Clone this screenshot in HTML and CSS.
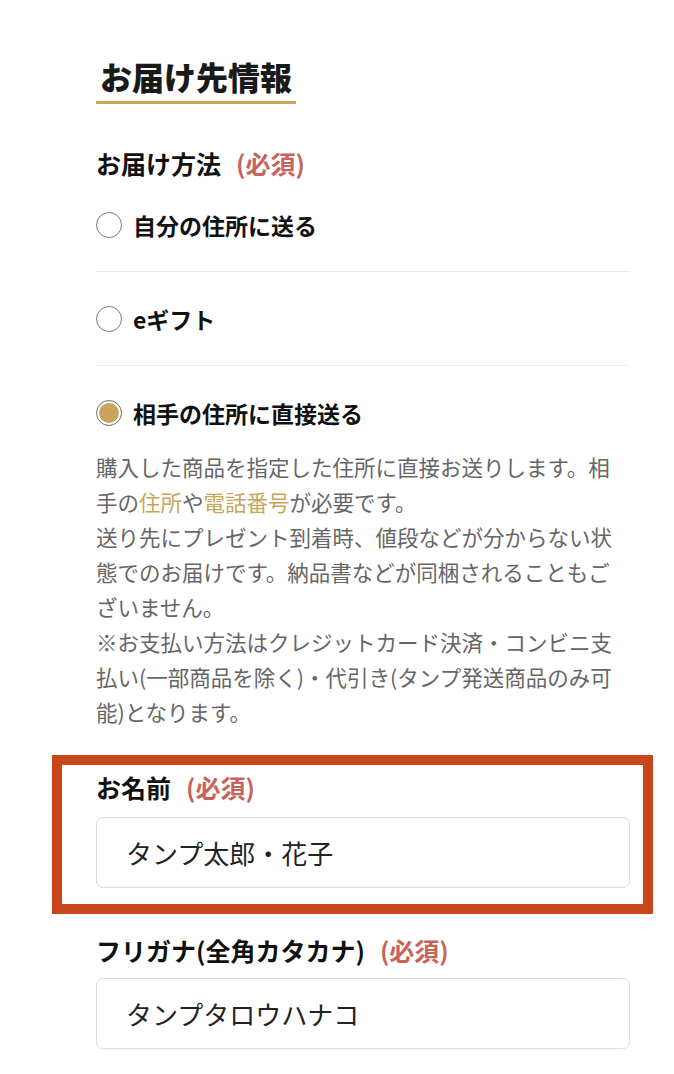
FILE: index.html
```html
<!DOCTYPE html>
<html lang="ja">
<head>
<meta charset="utf-8">
<title>お届け先情報</title>
<link rel="stylesheet" href="styles.css">
</head>
<body>
<div class="page">
  <h2 class="section-title">お届け先情報</h2>

  <div class="field-label field-label--method">お届け方法<span class="req">(必須)</span></div>
  <ul class="options">
    <li class="option">
      <div class="option-head"><span class="radio"></span><span class="option-text">自分の住所に送る</span></div>
    </li>
    <li class="option">
      <div class="option-head"><span class="radio"></span><span class="option-text">eギフト</span></div>
    </li>
    <li class="option option--selected">
      <div class="option-head"><span class="radio radio--on"></span><span class="option-text">相手の住所に直接送る</span></div>
      <p class="note">購入した商品を指定した住所に直接お送りします。相手の<span class="accent">住所</span>や<span class="accent">電話番号</span>が必要です。<br>送り先にプレゼント到着時、値段などが分からない状態でのお届けです。納品書などが同梱されることもございません。<br>※お支払い方法はクレジットカード決済・コンビニ支払い(一部商品を除く)・代引き(タンプ発送商品のみ可能)となります。</p>
    </li>
  </ul>

  <div class="field field--first field--highlight">
    <label class="field-label" for="name">お名前<span class="req">(必須)</span></label>
    <input class="text-input" id="name" type="text" value="タンプ太郎・花子">
  </div>

  <div class="field field--second">
    <label class="field-label" for="kana">フリガナ(全角カタカナ)<span class="req">(必須)</span></label>
    <input class="text-input" id="kana" type="text" value="タンプタロウハナコ">
  </div>
</div>
</body>
</html>
```

FILE: styles.css
```css
html, body {
  margin: 0;
  padding: 0;
  background: #ffffff;
}

body {
  font-family: "Noto Sans CJK JP", "Noto Sans", sans-serif;
  color: #111111;
}

.page {
  box-sizing: border-box;
  width: 674px;
  padding: 56px 44px 0 96px;
}

.section-title {
  width: fit-content;
  margin: 0;
  padding: 0 4px 5px;
  font-size: 32px;
  line-height: 40px;
  font-weight: 900;
  color: #1a1a1a;
  border-bottom: 3px solid #c9a55c;
}

.field-label {
  display: block;
  font-size: 25px;
  line-height: 30px;
  font-weight: 700;
  color: #111111;
  margin-bottom: 14.5px;
}

.field-label--method {
  margin-top: 44px;
  margin-bottom: 0;
}

.req {
  color: #c8635a;
  margin-left: 15px;
}

.options {
  list-style: none;
  margin: 0;
  padding: 0;
}

.option {
  padding: 33.5px 0;
  border-bottom: 1px solid #f0ebe4;
}

.option--selected {
  border-bottom: none;
  padding-bottom: 0;
}

.option-head {
  display: flex;
  align-items: center;
  height: 26px;
}

.radio {
  box-sizing: border-box;
  flex: 0 0 26px;
  width: 26px;
  height: 26px;
  border: 1px solid #7d7d7d;
  border-radius: 50%;
  background: #ffffff;
}

.radio--on {
  background: #c9a55c;
  box-shadow: inset 0 0 0 2px #ffffff;
}

.option-text {
  margin-left: 11px;
  font-size: 23px;
  line-height: 26px;
  font-weight: 700;
  color: #111111;
}

.note {
  margin: 23.5px 0 0;
  font-size: 21.5px;
  line-height: 35px;
  color: #666666;
}

.accent {
  color: #c9a55c;
}

.field {
  position: relative;
}

.field--first {
  margin-top: 43px;
}

.field--second {
  margin-top: 47px;
}

.field--second .field-label {
  margin-bottom: 13.5px;
}

.field--highlight::after {
  content: "";
  position: absolute;
  top: -17.5px;
  bottom: -26px;
  left: -44px;
  right: -23px;
  border: 10px solid #c9461a;
  pointer-events: none;
}

.text-input {
  display: block;
  box-sizing: border-box;
  width: 100%;
  height: 71px;
  margin: 0;
  padding: 0 29px;
  border: 1px solid #dcdcdc;
  border-radius: 7px;
  background: #ffffff;
  font-family: "Noto Sans CJK JP", "Noto Sans", sans-serif;
  font-size: 26px;
  color: #222222;
  outline: none;
}
```
